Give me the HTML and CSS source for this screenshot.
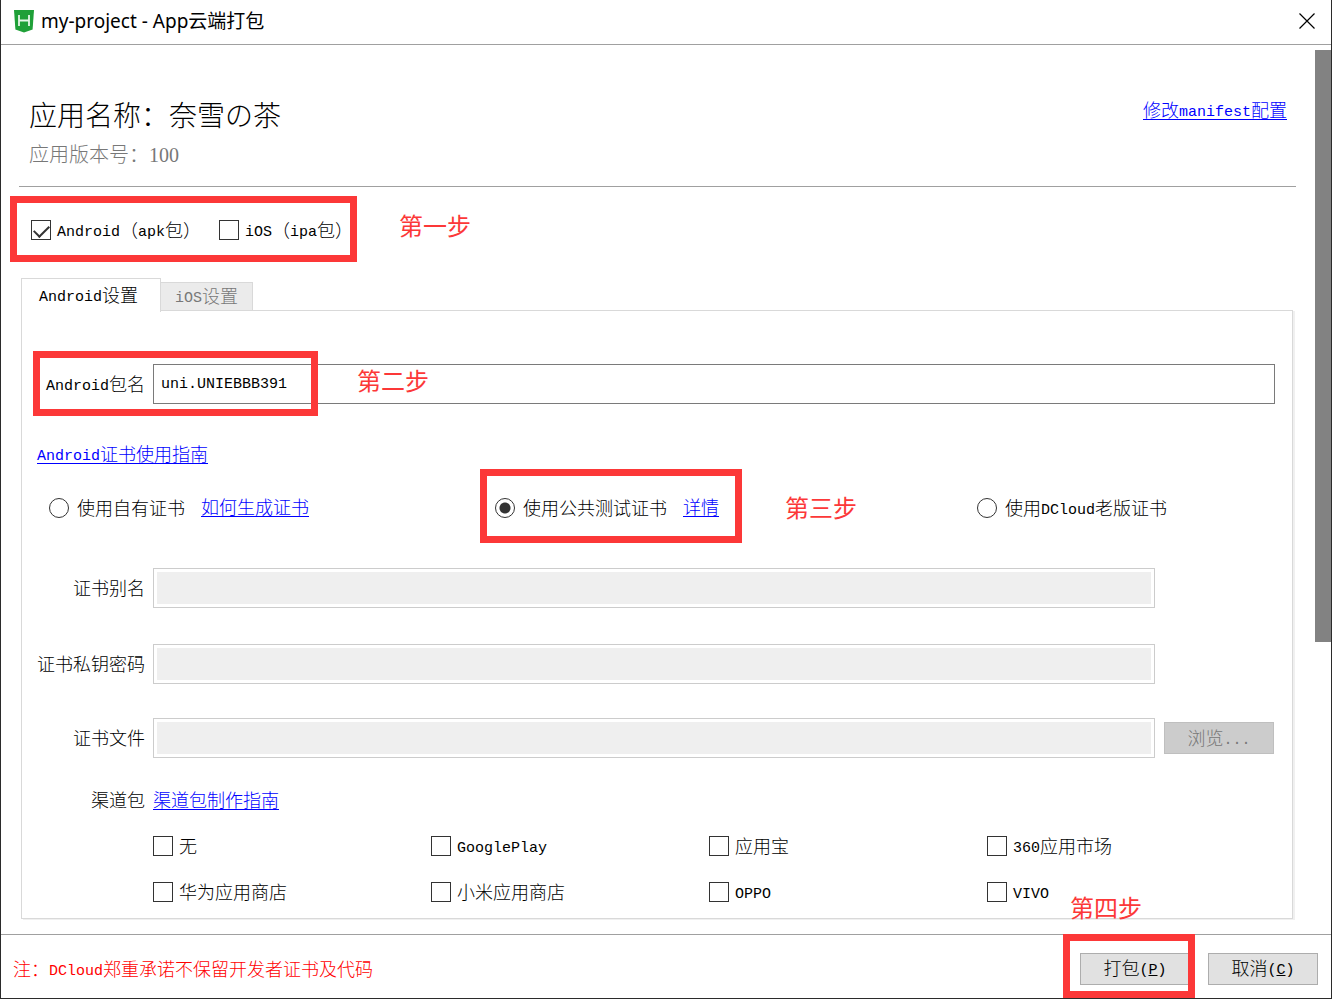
FILE: index.html
```html
<!DOCTYPE html>
<html lang="zh-CN">
<head>
<meta charset="utf-8">
<title>my-project - App云端打包</title>
<link rel="stylesheet" href="styles.css">
</head>
<body>
<div class="dialog">
  <header class="titlebar">
    <svg class="logo" viewBox="0 0 22 24" width="22" height="24" aria-hidden="true">
      <path d="M1 1H21L19.600 20.500L11 23.500L2.400 20.500Z" fill="#1fa038"/>
      <path d="M6 6V17M16 6V17M6 11.500H16" fill="none" stroke="#e6f6e8" stroke-width="1.800"/>
    </svg>
    <h1 class="caption">my-project - App云端打包</h1>
    <button class="close" type="button" aria-label="关闭">
      <svg viewBox="0 0 16 16" width="16" height="16"><path d="M0.500 0.500L15.500 15.500M15.500 0.500L0.500 15.500" fill="none" stroke="#000" stroke-width="1.200"/></svg>
    </button>
  </header>

  <div class="body">
    <main class="content">
      <section class="app-info">
        <div>
          <h2 class="app-name">应用名称：奈雪の茶</h2>
          <p class="app-version">应用版本号：<span class="digits">100</span></p>
        </div>
        <a class="link manifest" href="#">修改<span class="en">manifest</span>配置</a>
      </section>

      <div class="platforms">
        <label class="check"><input type="checkbox" checked><span><span class="en">Android</span>（<span class="en">apk</span>包）</span></label>
        <label class="check"><input type="checkbox"><span><span class="en">iOS</span>（<span class="en">ipa</span>包）</span></label>
        <div class="mark mark-platforms"></div>
        <span class="step step-one">第一步</span>
      </div>

      <div class="tabs" role="tablist">
        <button class="tab active" type="button" role="tab" aria-selected="true"><span class="en">Android</span>设置</button>
        <button class="tab" type="button" role="tab" aria-selected="false"><span class="en">iOS</span>设置</button>
      </div>

      <form class="panel">
        <div class="field package">
          <label for="package"><span class="en">Android</span>包名</label>
          <input class="text" id="package" type="text" value="uni.UNIEBBB391">
          <div class="mark mark-package"></div>
          <span class="step step-two">第二步</span>
        </div>

        <div class="guide"><a class="link" href="#"><span class="en">Android</span>证书使用指南</a></div>

        <div class="certs">
          <div class="cert">
            <label class="radio"><input type="radio" name="cert"><span>使用自有证书</span></label>
            <a class="link" href="#">如何生成证书</a>
          </div>
          <div class="cert">
            <label class="radio"><input type="radio" name="cert" checked><span>使用公共测试证书</span></label>
            <a class="link" href="#">详情</a>
            <div class="mark mark-cert"></div>
            <span class="step step-three">第三步</span>
          </div>
          <div class="cert">
            <label class="radio"><input type="radio" name="cert"><span>使用<span class="en">DCloud</span>老版证书</span></label>
          </div>
        </div>

        <div class="field alias">
          <label for="alias">证书别名</label>
          <input class="text" id="alias" type="text" disabled>
        </div>
        <div class="field password">
          <label for="password">证书私钥密码</label>
          <input class="text" id="password" type="text" disabled>
        </div>
        <div class="field file">
          <label for="file">证书文件</label>
          <input class="text" id="file" type="text" disabled>
          <button class="button" type="button" disabled>浏览<span class="en">...</span></button>
        </div>

        <div class="field channel">
          <span class="name">渠道包</span>
          <a class="link" href="#">渠道包制作指南</a>
        </div>
        <div class="channels">
          <label class="check"><input type="checkbox"><span>无</span></label>
          <label class="check"><input type="checkbox"><span><span class="en">GooglePlay</span></span></label>
          <label class="check"><input type="checkbox"><span>应用宝</span></label>
          <label class="check"><input type="checkbox"><span><span class="en">360</span>应用市场</span></label>
          <label class="check"><input type="checkbox"><span>华为应用商店</span></label>
          <label class="check"><input type="checkbox"><span>小米应用商店</span></label>
          <label class="check"><input type="checkbox"><span><span class="en">OPPO</span></span></label>
          <label class="check"><input type="checkbox"><span><span class="en">VIVO</span></span></label>
        </div>
      </form>
    </main>
    <div class="scrollbar"><div class="thumb"></div></div>
  </div>

  <footer class="footer">
    <p class="notice">注：<span class="en">DCloud</span>郑重承诺不保留开发者证书及代码</p>
    <div class="submit">
      <button class="button" type="button">打包<span class="en">(<u>P</u>)</span></button>
      <div class="mark mark-submit"></div>
      <span class="step step-four">第四步</span>
    </div>
    <button class="button" type="button">取消<span class="en">(<u>C</u>)</span></button>
  </footer>
</div>
</body>
</html>
```

FILE: styles.css
```css
* {
  box-sizing: border-box;
}

body {
  margin: 0;
  background: #fff;
  color: #000;
  font-family: "Noto Sans CJK SC", sans-serif;
  font-size: 18px;
  font-weight: 300;
  line-height: 24px;
}

h1, h2, p {
  margin: 0;
  font-weight: 300;
}

button, input {
  margin: 0;
  font: inherit;
  color: inherit;
}

/* Latin runs take no part in the height of a line */
.en {
  font-family: "Liberation Mono", monospace;
  font-size: 15px;
  line-height: 0;
  vertical-align: 1px;
}

.digits {
  font-family: "Liberation Serif", serif;
  line-height: 0;
}

.link {
  color: #00f;
  text-decoration: underline;
  text-decoration-thickness: 1px;
  text-underline-offset: 2px;
}

.dialog {
  display: flex;
  flex-direction: column;
  min-height: 100vh;
  border: 1px solid #2b2b2b;
  border-top: 0;
}

/* Title bar */
.titlebar {
  display: flex;
  align-items: center;
  height: 45px;
  padding: 0 16px 2px 12px;
  border-bottom: 1px solid #a0a0a0;
}

.caption {
  flex: 1;
  margin-left: 6px;
  font-family: "Noto Sans", "Noto Sans CJK SC", sans-serif;
  font-size: 19px;
  font-weight: 400;
}

.close {
  display: flex;
  padding: 0;
  border: 0;
  background: none;
}

/* Scrolling area */
.body {
  display: flex;
  flex: 1;
}

.content {
  flex: 1;
  min-width: 0;
  padding: 51px 19px 15px 18px;
}

.scrollbar {
  width: 16px;
  padding-top: 5px;
}

.thumb {
  height: 67%;
  background: #828282;
}

.app-info {
  display: flex;
  justify-content: space-between;
  align-items: flex-start;
  padding: 0 9px 18px 10px;
  border-bottom: 1px solid #a0a0a0;
}

.manifest {
  margin-top: 1px;
}

.app-name {
  font-size: 28px;
  line-height: 36px;
}

.app-version {
  margin-top: 8px;
  color: #787878;
  font-size: 20px;
  line-height: 28px;
}

.platforms {
  position: relative;
  display: flex;
  align-items: center;
  gap: 18px;
  height: 40px;
  margin-top: 23px;
  padding-left: 12px;
}

/* Check boxes and radio buttons */
.check, .radio {
  display: flex;
  align-items: center;
  gap: 6px;
  height: 24px;
}

.radio {
  gap: 8px;
}

.check span, .radio span {
  padding-bottom: 2px;
}

.check input, .radio input {
  flex: none;
  width: 20px;
  height: 20px;
  appearance: none;
  border: 1px solid #333;
  background: #fff;
}

.radio input {
  border-radius: 50%;
}

.check input:checked {
  display: grid;
  justify-items: center;
  padding-top: 4px;
}

.check input:checked::before {
  content: "";
  width: 13px;
  height: 7px;
  border: solid #333;
  border-width: 0 0 2px 2px;
  transform: rotate(-45deg);
}

.radio input:checked {
  background: radial-gradient(circle, #333 5px, #fff 6px);
}

/* Tabs */
.tabs {
  display: flex;
  align-items: flex-end;
  height: 32px;
  margin: 28px 0 0 2px;
}

.tab {
  height: 28px;
  padding: 0 14px 4px;
  border: 1px solid #d9d9d9;
  border-width: 1px 1px 0 0;
  background: #ebebeb;
  color: #787878;
}

.tab.active {
  position: relative;
  z-index: 1;
  height: 34px;
  margin-bottom: -2px;
  padding: 0 22px 4px 17px;
  border-left-width: 1px;
  background: #fff;
  color: #000;
}

.panel {
  margin: 0 3px 0 2px;
  padding: 53px 0 14px;
  border: 1px solid #d9d9d9;
  box-shadow: 2px 1px 0 #f0f0f0;
}

.field {
  position: relative;
  display: grid;
  grid-template-columns: 123px minmax(0, 1fr) 111px;
  align-items: center;
  gap: 0 8px;
  padding-right: 18px;
}

.field label {
  padding-bottom: 2px;
}

.field label, .name {
  text-align: right;
}

.field .button {
  justify-self: end;
}

.package {
  grid-template-columns: 123px minmax(0, 1fr);
  padding-right: 17px;
}

.text {
  width: 100%;
  height: 40px;
  padding: 1px 7px 0;
  border: 1px solid #7a7a7a;
  background: #fff;
  font-family: "Liberation Mono", monospace;
  font-size: 15px;
}

.text:disabled {
  padding: 3px;
  border-color: #ccc;
  background: #efefef content-box;
}

.guide {
  margin: 37px 0 0 15px;
}

.certs {
  display: grid;
  grid-template-columns: minmax(0, 446fr) minmax(0, 482fr) minmax(0, 315fr);
  margin-top: 31px;
  padding-left: 27px;
}

.cert {
  position: relative;
  display: flex;
  align-items: center;
  gap: 16px;
  height: 24px;
}

.cert .link {
  padding-bottom: 4px;
}

.alias {
  margin-top: 48px;
}

.password {
  margin-top: 36px;
}

.file {
  margin-top: 34px;
}

.channel {
  margin-top: 29px;
}

.channels {
  display: grid;
  grid-template-columns: repeat(4, minmax(0, 1fr));
  gap: 22px 0;
  margin-top: 23px;
  padding: 0 27px 0 131px;
}

.button {
  width: 110px;
  height: 32px;
  padding: 0 0 3px;
  border: 1px solid #adadad;
  background: #e1e1e1;
  line-height: 24px;
}

.button:disabled {
  border-color: #bfbfbf;
  background: #ccc;
  color: #787878;
}

/* Footer */
.footer {
  display: flex;
  align-items: center;
  gap: 18px;
  height: 64px;
  padding: 4px 13px 0 12px;
  border-top: 1px solid #a0a0a0;
}

.notice {
  flex: 1;
  padding-bottom: 2px;
  color: #f00;
}

.submit {
  position: relative;
  display: flex;
}

/* Annotations drawn over the dialog */
.mark {
  position: absolute;
  border: 7px solid #fc3838;
  pointer-events: none;
}

.step {
  position: absolute;
  color: #fc3838;
  font-size: 24px;
  font-weight: 400;
  line-height: 32px;
  white-space: nowrap;
}

.mark-platforms {
  top: -14px;
  left: -9px;
  width: 347px;
  height: 66px;
}

.step-one {
  top: -1px;
  left: 380px;
}

.mark-package {
  top: -13px;
  left: 11px;
  width: 285px;
  height: 65px;
}

.step-two {
  top: 0;
  left: 335px;
}

.mark-cert {
  top: -27px;
  left: -15px;
  width: 262px;
  height: 74px;
}

.step-three {
  top: -5px;
  left: 290px;
}

.mark-submit {
  top: -19px;
  left: -17px;
  width: 132px;
  height: 64px;
}

.step-four {
  top: -62px;
  left: -10px;
}
```
